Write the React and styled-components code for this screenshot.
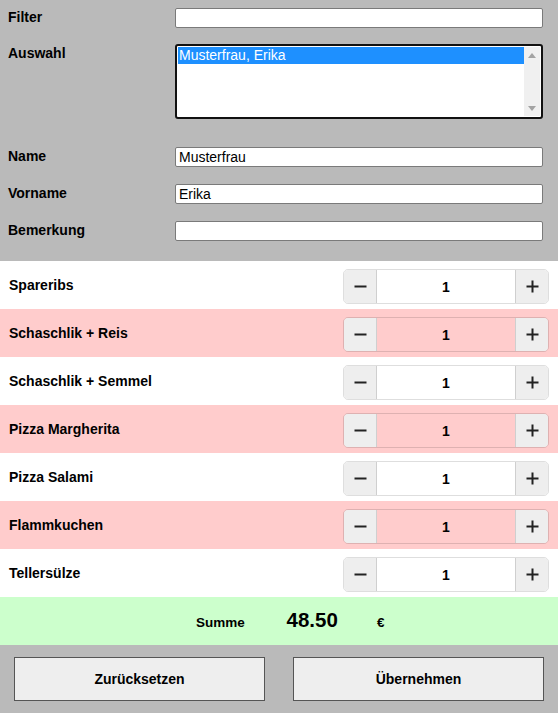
import styled, { createGlobalStyle } from "styled-components";

const GlobalStyle = createGlobalStyle`
  html, body {
    margin: 0;
    padding: 0;
    background: #ffffff;
  }
  body {
    font-family: "Liberation Sans", Arial, sans-serif;
    color: #000;
  }
  * { box-sizing: border-box; }
`;

const items = [
  "Spareribs",
  "Schaschlik + Reis",
  "Schaschlik + Semmel",
  "Pizza Margherita",
  "Pizza Salami",
  "Flammkuchen",
  "Tellersülze",
];

const Page = styled.div`
  width: 558px;
  display: flex;
  flex-direction: column;
`;

const Head = styled.div`
  background: #bababa;
  padding: 8px 15px 19px 8px;
  display: grid;
  grid-template-columns: 167px 1fr;
`;

const Label = styled.label`
  font-size: 14px;
  font-weight: bold;
  line-height: 16px;
  padding-top: 1px;
  margin-bottom: ${props => props.$space || "17px"};
`;

const Field = styled.input`
  width: 100%;
  height: 20px;
  border: 1px solid #7a7a7a;
  border-radius: 2px;
  background: #fff;
  padding: 0 3px;
  font-family: "Liberation Sans", Arial, sans-serif;
  font-size: 14px;
  color: #000;
  outline: none;
  margin-bottom: ${props => props.$space || "17px"};
`;

const ListBox = styled.div`
  height: 75px;
  border: 2px solid #111;
  border-radius: 3px;
  background: #fff;
  padding: 1px;
  display: flex;
  margin-bottom: 28px;
`;

const Options = styled.div`
  flex: 1;
`;

const Option = styled.div`
  height: 17px;
  line-height: 17px;
  padding-left: 1px;
  font-size: 14px;
  color: ${props => (props.$selected ? "#fff" : "#000")};
  background: ${props => (props.$selected ? "#1e90ff" : "transparent")};
`;

const ScrollBar = styled.div`
  width: 16px;
  background: #f0f0f0;
  display: flex;
  flex-direction: column;
  justify-content: space-between;
  align-items: center;
  padding: 6px 0 5px;
`;

const Row = styled.div`
  display: flex;
  align-items: center;
  justify-content: space-between;
  padding: 0 9px;
  background: ${props => (props.$odd ? "#ffcccc" : "#ffffff")};
  border-top: ${props => (props.$first ? "1px solid #bababa" : "none")};
  height: ${props => (props.$first ? "49px" : "48px")};
`;

const ItemName = styled.span`
  font-size: 14px;
  font-weight: bold;
`;

const Stepper = styled.div`
  width: 206px;
  height: 35px;
  margin-top: 3px;
  display: flex;
  border: 1px solid rgba(0, 0, 0, 0.13);
  border-radius: 5px;
  overflow: hidden;
`;

const StepButton = styled.div`
  width: 33px;
  background: #eeeeee;
  display: flex;
  align-items: center;
  justify-content: center;
  border-left: ${props => (props.$right ? "1px solid rgba(0,0,0,0.13)" : "none")};
  border-right: ${props => (props.$right ? "none" : "1px solid rgba(0,0,0,0.13)")};
`;

const Count = styled.div`
  flex: 1;
  display: flex;
  align-items: center;
  justify-content: center;
  font-size: 14px;
  font-weight: bold;
`;

const SumRow = styled.div`
  height: 48px;
  background: #ccffcc;
  display: flex;
  align-items: baseline;
  padding: 11px 0 0 196px;
`;

const SumCell = styled.span`
  width: 90.5px;
  font-weight: bold;
  font-size: ${props => props.$size || "13.5px"};
`;

const Footer = styled.div`
  background: #bababa;
  padding: 12px 14px;
  display: grid;
  grid-template-columns: 1fr 1fr;
  gap: 28px;
`;

const Button = styled.button`
  height: 44px;
  background: #eeeeee;
  border: 1px solid #555;
  font-family: "Liberation Sans", Arial, sans-serif;
  font-size: 14px;
  font-weight: bold;
  color: #000;
  padding: 0;
`;

function Minus() {
  return (
    <svg width="13" height="13" viewBox="0 0 13 13">
      <rect x="0.5" y="5.5" width="12" height="2" fill="#222" />
    </svg>
  );
}

function Plus() {
  return (
    <svg width="13" height="13" viewBox="0 0 13 13">
      <rect x="0.5" y="5.5" width="12" height="2" fill="#222" />
      <rect x="5.5" y="0.5" width="2" height="12" fill="#222" />
    </svg>
  );
}

function Arrow({ down }) {
  return (
    <svg width="8" height="5" viewBox="0 0 8 5">
      <path d={down ? "M0 0 L8 0 L4 5 Z" : "M0 5 L8 5 L4 0 Z"} fill="#a3a3a3" />
    </svg>
  );
}

export default function App() {
  return (
    <Page>
      <GlobalStyle />
      <Head>
        <Label $space="16px">Filter</Label>
        <Field $space="16px" />
        <Label $space="28px">Auswahl</Label>
        <ListBox>
          <Options>
            <Option $selected>Musterfrau, Erika</Option>
          </Options>
          <ScrollBar>
            <Arrow />
            <Arrow down />
          </ScrollBar>
        </ListBox>
        <Label>Name</Label>
        <Field defaultValue="Musterfrau" />
        <Label>Vorname</Label>
        <Field defaultValue="Erika" />
        <Label $space="0">Bemerkung</Label>
        <Field $space="0" />
      </Head>
      {items.map((name, i) => (
        <Row key={name} $odd={i % 2 === 1} $first={i === 0}>
          <ItemName>{name}</ItemName>
          <Stepper>
            <StepButton><Minus /></StepButton>
            <Count>1</Count>
            <StepButton $right><Plus /></StepButton>
          </Stepper>
        </Row>
      ))}
      <SumRow>
        <SumCell>Summe</SumCell>
        <SumCell $size="20.5px">48.50</SumCell>
        <SumCell>€</SumCell>
      </SumRow>
      <Footer>
        <Button>Zurücksetzen</Button>
        <Button>Übernehmen</Button>
      </Footer>
    </Page>
  );
}
